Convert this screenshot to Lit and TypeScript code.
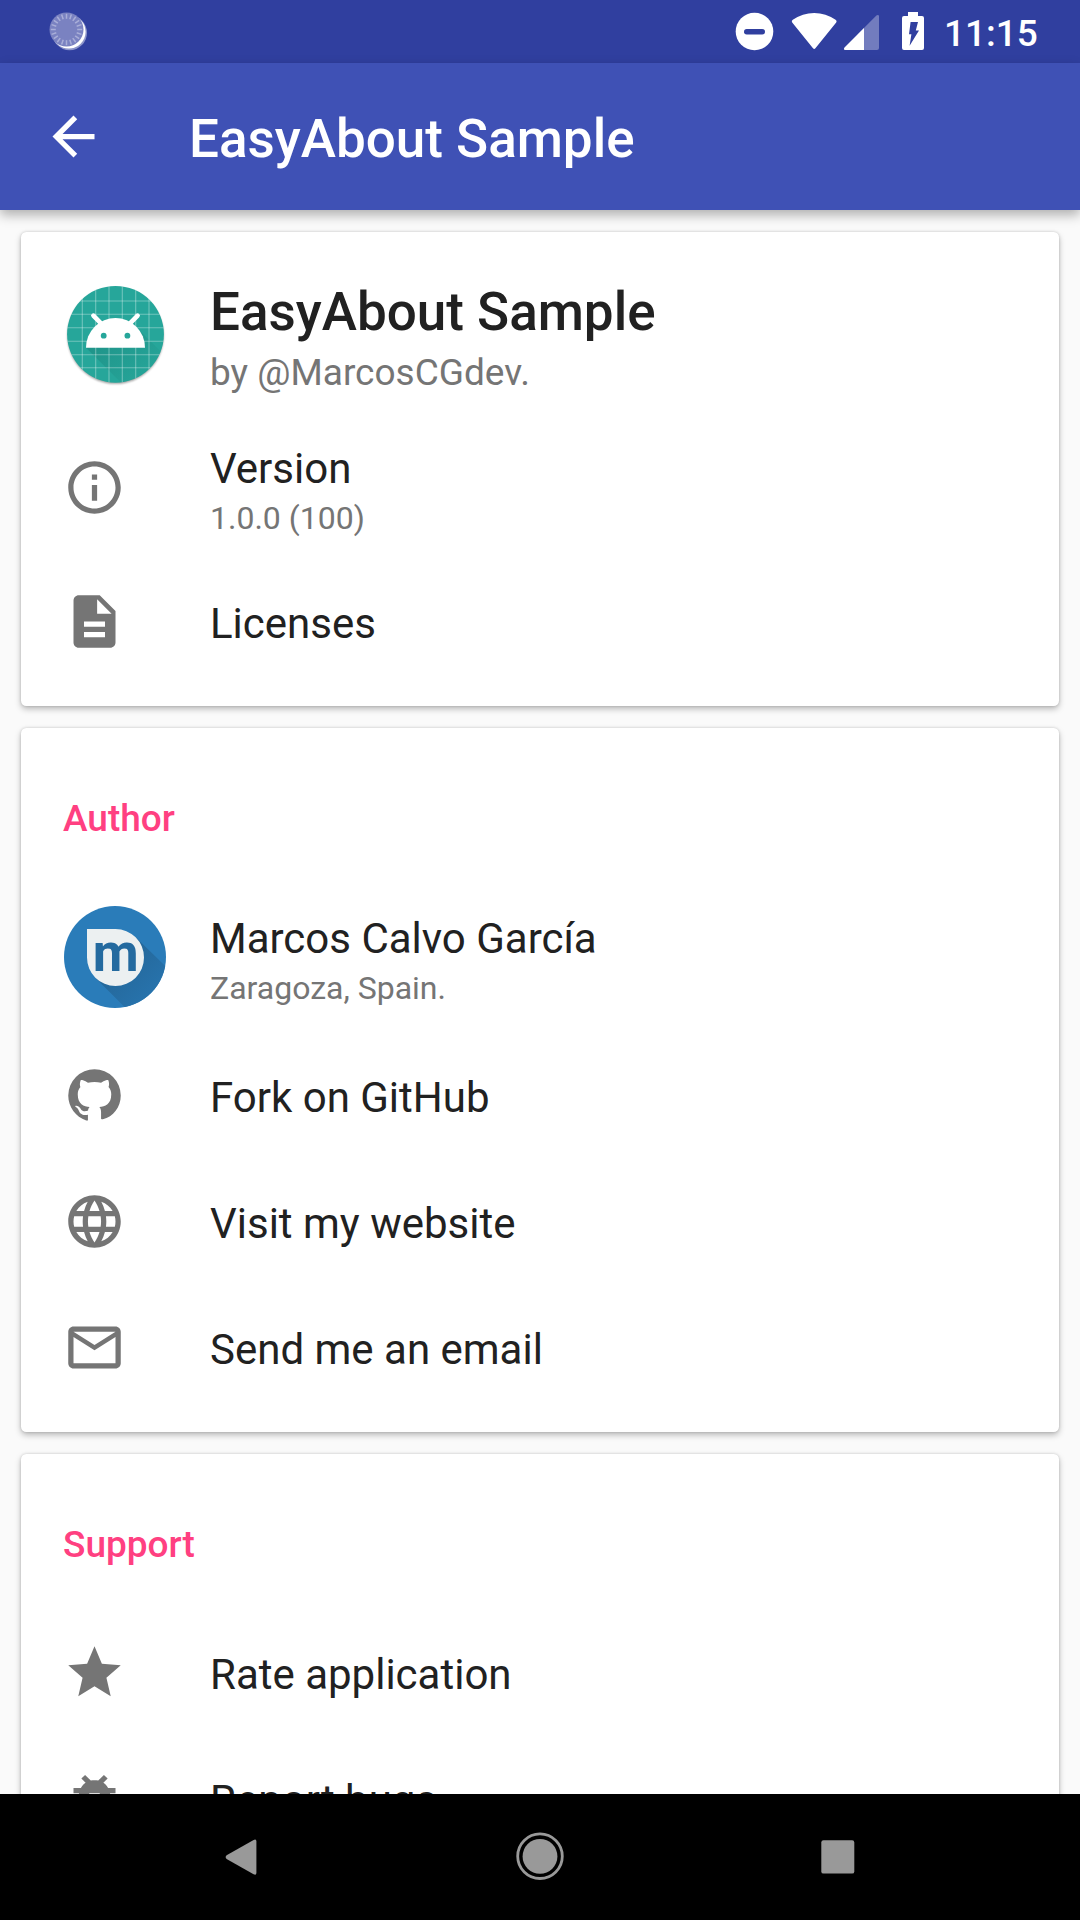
import { LitElement, html, css, svg, nothing } from "lit";
import { customElement, property } from "lit/decorators.js";

const icons: Record<string, string> = {
  back: "M20 11H7.83l5.59-5.59L12 4l-8 8 8 8 1.41-1.41L7.83 13H20v-2z",
  info: "M11 17h2v-6h-2v6zm1-15C6.48 2 2 6.48 2 12s4.48 10 10 10 10-4.48 10-10S17.52 2 12 2zm0 18c-4.41 0-8-3.59-8-8s3.59-8 8-8 8 3.59 8 8-3.59 8-8 8zM11 9h2V7h-2v2z",
  description:
    "M14 2H6c-1.1 0-1.99.9-1.99 2L4 20c0 1.1.89 2 1.99 2H18c1.1 0 2-.9 2-2V8l-6-6zm2 16H8v-2h8v2zm0-4H8v-2h8v2zm-3-5V3.5L18.5 9H13z",
  github:
    "M12 2A10 10 0 0 0 2 12c0 4.42 2.87 8.17 6.84 9.5.3.08.66.1.66-.1v-2.09c-2.77.6-3.36-1.34-3.36-1.34-.46-1.16-1.11-1.47-1.11-1.47-.91-.62.07-.6.07-.6 1 .07 1.53 1.03 1.53 1.03.87 1.52 2.34 1.07 2.91.83.09-.65.35-1.09.63-1.34-2.22-.25-4.55-1.11-4.55-4.92 0-1.11.38-2 1.03-2.71-.1-.25-.45-1.29.1-2.64 0 0 .84-.27 2.75 1.02.79-.22 1.65-.33 2.5-.33.85 0 1.71.11 2.5.33 1.91-1.29 2.75-1.02 2.75-1.02.55 1.35.2 2.39.1 2.64.65.71 1.03 1.6 1.03 2.71 0 3.82-2.34 4.66-4.57 4.91.36.31.69.92.69 1.85v2.64c0 .2.36.18.67.1C19.14 20.16 22 16.42 22 12A10 10 0 0 0 12 2z",
  globe:
    "M11.99 2C6.47 2 2 6.48 2 12s4.47 10 9.99 10C17.52 22 22 17.52 22 12S17.52 2 11.99 2zm6.93 6h-2.95c-.32-1.25-.78-2.45-1.38-3.56 1.84.63 3.37 1.91 4.33 3.56zM12 4.04c.83 1.2 1.48 2.53 1.91 3.96h-3.82c.43-1.43 1.08-2.76 1.91-3.96zM4.26 14C4.1 13.36 4 12.69 4 12s.1-1.36.26-2h3.38c-.08.66-.14 1.32-.14 2 0 .68.06 1.34.14 2H4.26zm.82 2h2.95c.32 1.25.78 2.45 1.38 3.56-1.84-.63-3.37-1.9-4.33-3.56zm2.95-8H5.08c.96-1.66 2.49-2.93 4.33-3.56C8.81 5.55 8.35 6.75 8.03 8zM12 19.96c-.83-1.2-1.48-2.53-1.91-3.96h3.82c-.43 1.43-1.08 2.76-1.91 3.96zM14.34 14H9.66c-.09-.66-.16-1.32-.16-2 0-.68.07-1.35.16-2h4.68c.09.65.16 1.32.16 2 0 .68-.07 1.34-.16 2zm.25 5.56c.6-1.11 1.06-2.31 1.38-3.56h2.95c-.96 1.65-2.49 2.93-4.33 3.56zM16.36 14c.08-.66.14-1.32.14-2 0-.68-.06-1.34-.14-2h3.38c.16.64.26 1.31.26 2s-.1 1.36-.26 2h-3.38z",
  mail: "M20 4H4c-1.1 0-1.99.9-1.99 2L2 18c0 1.1.9 2 2 2h16c1.1 0 2-.9 2-2V6c0-1.1-.9-2-2-2zm0 14H4V8l8 5 8-5v10zm-8-7L4 6h16l-8 5z",
  star: "M12 17.27L18.18 21l-1.64-7.03L22 9.24l-7.19-.61L12 2 9.19 8.63 2 9.24l5.46 4.73L5.82 21z",
  bug: "M20 8h-2.81c-.45-.78-1.07-1.45-1.82-1.96L17 4.41 15.59 3l-2.17 2.17C12.96 5.06 12.49 5 12 5c-.49 0-.96.06-1.41.17L8.41 3 7 4.41l1.62 1.63C7.88 6.55 7.26 7.22 6.81 8H4v2h2.09c-.05.33-.09.66-.09 1v1H4v2h2v1c0 .34.04.67.09 1H4v2h2.81c1.04 1.79 2.97 3 5.19 3s4.15-1.21 5.19-3H20v-2h-2.09c.05-.33.09-.66.09-1v-1h2v-2h-2v-1c0-.34-.04-.67-.09-1H20V8zm-6 8h-4v-2h4v2zm0-4h-4v-2h4v2z",
};

const icon = (name: string) => html`
  <svg class="icon" viewBox="0 0 24 24" width="63" height="63"><path d=${icons[name]} fill="currentColor" /></svg>
`;

const gridX = [82.3, 95.7, 109, 122.3, 135.7, 149];
const gridY = [301, 314.3, 327.7, 341.3, 354.7, 367.7];

const launcher = html`
  <svg class="picture" viewBox="63 282 105 105" width="105" height="105">
    <defs>
      <clipPath id="disc"><circle cx="115.5" cy="334.3" r="48.4" /></clipPath>
      <linearGradient id="cast" gradientUnits="userSpaceOnUse" x1="105" y1="335" x2="140" y2="375">
        <stop offset="0" stop-color="#0b5c55" stop-opacity=".24" />
        <stop offset="1" stop-color="#0b5c55" stop-opacity=".04" />
      </linearGradient>
      <filter id="soft" x="-10%" y="-10%" width="120%" height="120%"><feGaussianBlur stdDeviation="1.2" /></filter>
    </defs>
    <circle cx="115.5" cy="335.8" r="48" fill="#000" opacity=".38" filter="url(#soft)" />
    <circle cx="115.5" cy="334.3" r="48.4" fill="#26a69a" />
    <g clip-path="url(#disc)">
      <path d="M86 347.7L130 391.7H190V380L140 331Z" fill="url(#cast)" />
      <g stroke="#fff" stroke-opacity=".34" stroke-width="1.1">
        ${gridX.map((x) => svg`<line x1=${x} x2=${x} y1="280" y2="390" />`)}
        ${gridY.map((y) => svg`<line x1="60" x2="170" y1=${y} y2=${y} />`)}
      </g>
    </g>
    <path d="M86 347.7A29.5 29.7 0 0 1 145 347.7Z" fill="#fff" />
    <path d="M93.4 315.6L101 323.4M137.6 315.6L130 323.4" stroke="#fff" stroke-width="4.6" stroke-linecap="round" />
    <circle cx="103.7" cy="335.7" r="2.9" fill="#26a69a" />
    <circle cx="127.4" cy="335.7" r="2.9" fill="#26a69a" />
  </svg>
`;

const avatar = html`
  <svg class="picture" viewBox="63 904 105 105" width="105" height="105">
    <defs>
      <clipPath id="face"><circle cx="115" cy="957" r="51" /></clipPath>
      <linearGradient id="fade" gradientUnits="userSpaceOnUse" x1="118" y1="960" x2="150" y2="992">
        <stop offset="0" stop-color="#246799" />
        <stop offset="1" stop-color="#2772ab" />
      </linearGradient>
    </defs>
    <circle cx="115" cy="957" r="51" fill="#2a7cb9" />
    <path clip-path="url(#face)" d="M95.3 977.7L145 1027.4L190 990L135.7 937.3Z" fill="url(#fade)" />
    <path d="M87 929H115.5A28.5 28.5 0 1 1 87 957.5Z" fill="#ecf0f1" />
    <text class="mono" x="115.6" y="971" text-anchor="middle">m</text>
  </svg>
`;

const ticks = Array.from({ length: 20 }, (_, i) => i * 18);

@customElement("status-bar")
export class StatusBar extends LitElement {
  static styles = css`
    :host {
      display: flex;
      height: 63px;
      background: #303f9f;
      color: #fff;
      font: 500 37px/43px Roboto, sans-serif;
    }
    svg {
      display: block;
      flex: none;
    }
    .spacer {
      flex: 1;
    }
    .clock {
      padding-top: 12px;
      width: 136px;
      white-space: nowrap;
    }
  `;
  render() {
    return html`
      <svg width="130" height="63" viewBox="0 0 130 63">
        <circle cx="69.6" cy="32.8" r="17.4" fill="#fff" opacity=".45" />
        <circle cx="68.8" cy="31.8" r="16.8" fill="#fff" />
        <circle cx="66.5" cy="29.5" r="17" fill="#7a82c1" />
        ${ticks.map(
          (a) =>
            svg`<line x1="66.5" x2="66.5" y1="13.8" y2="18.8" stroke="#a9aed8" stroke-width="1.5" transform="rotate(${a} 66.5 29.5)" />`
        )}
      </svg>
      <div class="spacer"></div>
      <svg width="210" height="63" viewBox="734 0 210 63" fill="#fff">
        <circle cx="754.5" cy="31.5" r="18.8" />
        <rect x="744" y="29" width="21" height="5.4" rx="2.7" fill="#303f9f" />
        <path d="M792.2 22.6Q791 21 792.8 19.8Q802.5 12.9 814.2 12.9T835.6 19.8Q837.4 21 836.2 22.6L815.4 48.2Q814.2 49.6 813 48.2Z" />
        <path d="M844.6 47.4L876.4 15.6Q877.4 14.6 878.2 15Q879 15.3 879 16.4V48Q879 50 877 50H845.5Q842.8 49.6 844.6 47.4Z" opacity=".32" />
        <path d="M844.6 47.4L864 28V50H845.5Q842.8 49.6 844.6 47.4Z" />
        <path
          fill-rule="evenodd"
          d="M908 12H918V16H922Q924 16 924 18V48Q924 50 922 50H904Q902 50 902 48V18Q902 16 904 16H908ZM910.6 22L909 34.2H911.4L909.6 45.8L919 30.6H915.8L918 22Z"
        />
      </svg>
      <div class="clock">11:15</div>
    `;
  }
}

@customElement("about-row")
export class AboutRow extends LitElement {
  @property() icon = "";
  @property() label = "";
  @property() detail = "";
  static styles = css`
    :host {
      display: flex;
      height: 126px;
      padding-left: 42px;
      box-sizing: border-box;
      font-family: Roboto, sans-serif;
      white-space: nowrap;
    }
    svg {
      display: block;
    }
    .lead {
      flex: none;
      width: 147px;
      padding-top: 32px;
      color: #757575;
    }
    .body {
      padding-top: 41px;
    }
    .label {
      font-size: 42px;
      line-height: 49px;
      color: #212121;
    }
    .detail {
      margin-top: 6px;
      font-size: 32px;
      line-height: 38px;
      color: #757575;
    }
    :host(.two) .lead {
      padding-top: 24px;
    }
    :host(.two) .body {
      padding-top: 12px;
    }
    :host(.person) {
      height: 155px;
    }
    :host(.person) .lead {
      padding-top: 27px;
    }
    :host(.person) .body {
      padding-top: 37px;
    }
    :host(.app) {
      height: 200px;
    }
    :host(.app) .lead {
      padding-top: 50px;
    }
    :host(.app) .body {
      padding-top: 49px;
    }
    :host(.app) .label {
      font-size: 53px;
      line-height: 62px;
      font-weight: 500;
    }
    :host(.app) .detail {
      margin-top: 8px;
      font-size: 37px;
      line-height: 43px;
    }
    .mono {
      font: 700 53px Roboto, sans-serif;
      fill: #246a9f;
    }
  `;
  render() {
    const lead = this.icon === "launcher" ? launcher : this.icon === "avatar" ? avatar : icon(this.icon);
    return html`
      <div class="lead">${lead}</div>
      <div class="body">
        <div class="label">${this.label}</div>
        ${this.detail ? html`<div class="detail">${this.detail}</div>` : nothing}
      </div>
    `;
  }
}

@customElement("app-root")
export class AppRoot extends LitElement {
  static styles = css`
    :host {
      display: flex;
      flex-direction: column;
      height: 1920px;
      overflow: hidden;
      background: #fafafa;
      font-family: Roboto, sans-serif;
    }
    .toolbar {
      flex: none;
      display: flex;
      height: 147px;
      background: #3f51b5;
      color: #fff;
      z-index: 1;
      box-shadow: 0 5px 11px rgba(0, 0, 0, 0.3);
      position: relative;
    }
    .toolbar svg {
      display: block;
    }
    .nav-icon {
      width: 147px;
      padding: 42px 0 0 42px;
      box-sizing: content-box;
    }
    .title {
      padding-top: 45px;
      font-size: 53px;
      line-height: 62px;
      font-weight: 500;
    }
    .content {
      flex: 1;
      min-height: 0;
      overflow: hidden;
      display: flex;
      flex-direction: column;
      gap: 22px;
      padding: 22px 21px 0;
    }
    .card {
      flex: none;
      background: #fff;
      border-radius: 5.25px;
      padding-bottom: 22px;
      box-shadow: 0 3px 6px rgba(0, 0, 0, 0.26), 0 0 3px rgba(0, 0, 0, 0.16);
    }
    .heading {
      padding: 69px 42px 0;
      height: 149px;
      box-sizing: border-box;
      font-size: 37px;
      line-height: 43px;
      font-weight: 500;
      color: #ff4081;
    }
    .heading.tall {
      height: 155px;
    }
    .navbar {
      flex: none;
      display: flex;
      justify-content: space-between;
      height: 126px;
      box-sizing: border-box;
      padding: 32px 212px 0 211px;
      background: #000;
    }
  `;
  render() {
    return html`
      <status-bar></status-bar>
      <div class="toolbar">
        <div class="nav-icon">${icon("back")}</div>
        <div class="title">EasyAbout Sample</div>
      </div>
      <div class="content">
        <div class="card">
          <about-row class="app" icon="launcher" label="EasyAbout Sample" detail="by @MarcosCGdev."></about-row>
          <about-row class="two" icon="info" label="Version" detail="1.0.0 (100)"></about-row>
          <about-row icon="description" label="Licenses"></about-row>
        </div>
        <div class="card">
          <div class="heading">Author</div>
          <about-row class="person" icon="avatar" label="Marcos Calvo García" detail="Zaragoza, Spain."></about-row>
          <about-row icon="github" label="Fork on GitHub"></about-row>
          <about-row icon="globe" label="Visit my website"></about-row>
          <about-row icon="mail" label="Send me an email"></about-row>
        </div>
        <div class="card">
          <div class="heading tall">Support</div>
          <about-row icon="star" label="Rate application"></about-row>
          <about-row icon="bug" label="Report bugs"></about-row>
        </div>
      </div>
      <div class="navbar">
        <svg width="60" height="60" viewBox="211 1826 60 60">
          <path
            d="M226.6 1855.2L253.6 1840Q256.4 1838.6 256.4 1841.4V1872.8Q256.4 1875.6 253.6 1874.2L226.6 1859Q224.6 1857 226.6 1855.2Z"
            fill="#999"
          />
        </svg>
        <svg width="60" height="60" viewBox="509.5 1826 60 60">
          <circle cx="539.5" cy="1856.2" r="22.3" fill="none" stroke="#999" stroke-width="2.8" />
          <circle cx="539.5" cy="1856.4" r="17.4" fill="#999" />
        </svg>
        <svg width="60" height="60" viewBox="808 1826 60 60">
          <rect x="821.3" y="1840.2" width="33" height="33.4" rx="2.2" fill="#999" />
        </svg>
      </div>
    `;
  }
}
